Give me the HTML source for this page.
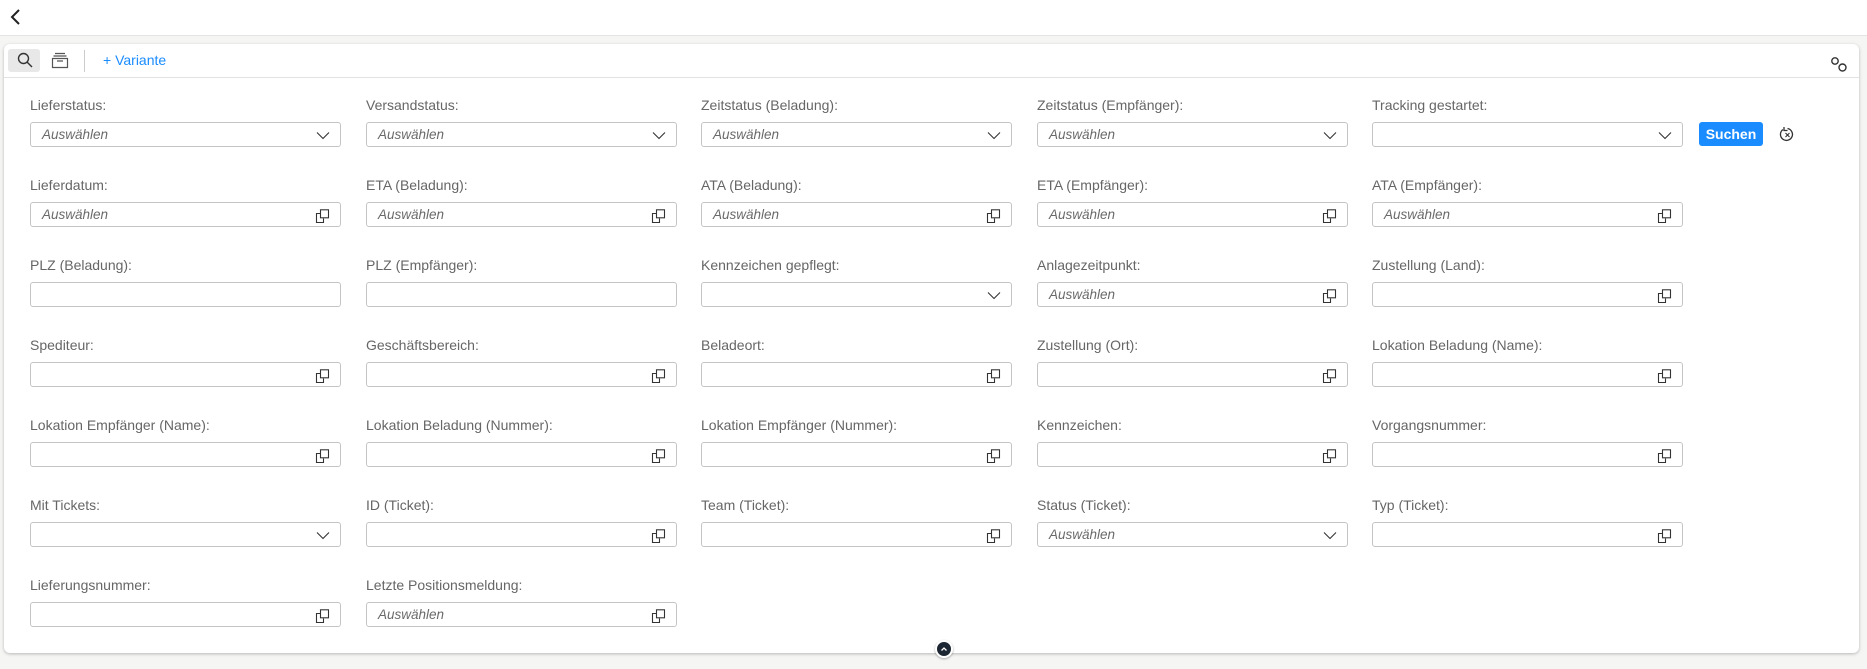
<!DOCTYPE html>
<html><head><meta charset="utf-8"><style>
*{box-sizing:border-box;margin:0;padding:0}
body{width:1867px;height:669px;background:#f5f5f4;font-family:"Liberation Sans",sans-serif;position:relative;overflow:hidden}
.top{position:absolute;left:0;top:0;width:1867px;height:36px;background:#fff;border-bottom:1px solid #e4e4e4}
.card{position:absolute;left:4px;top:44px;width:1855px;height:609px;background:#fff;border-radius:6px;box-shadow:0 1px 3px rgba(0,0,0,.25)}
.tb{position:absolute;left:0;top:0;width:100%;height:34px;border-bottom:1px solid #e2e2e2}
.lbl{position:absolute;font-size:14px;color:#666;white-space:nowrap}
.inp{position:absolute;width:311px;height:25px;border:1px solid #c4c4c4;border-radius:3px;background:#fff}
.inp i{position:absolute;left:11px;top:4px;font-size:13.5px;color:#6a6a6a}
.inp svg{position:absolute;right:10px;top:6px}
</style></head><body>
<div class="top"><svg style="position:absolute;left:10px;top:9px" width="12" height="16" viewBox="0 0 12 16"><path d="M9 1L2 8l7 7" stroke="#222" stroke-width="2" fill="none"/></svg></div>
<div class="card">
<div class="tb">
<div style="position:absolute;left:4px;top:5px;width:32px;height:23px;background:#e8e8e8;border-radius:3px"></div>
<svg style="position:absolute;left:13px;top:8px" width="16" height="16" viewBox="0 0 16 16"><circle cx="6.5" cy="6.5" r="5" stroke="#333" stroke-width="1.4" fill="none"/><path d="M10 10l5 5" stroke="#333" stroke-width="1.4"/></svg>
<svg style="position:absolute;left:47px;top:8px" width="18" height="17" viewBox="0 0 18 17"><path d="M4 1.5h10M2.5 4h13M1.5 6.5h15v9h-15z M6 9h6" stroke="#555" stroke-width="1.2" fill="none"/></svg>
<div style="position:absolute;left:80px;top:6px;width:1px;height:22px;background:#ccc"></div>
<div style="position:absolute;left:99px;top:8px;font-size:14px;color:#1a8cff">+ Variante</div>
<svg style="position:absolute;left:1826px;top:12px" width="20" height="18" viewBox="0 0 20 18"><circle cx="5" cy="5" r="3.2" stroke="#333" stroke-width="1.4" fill="none"/><circle cx="12.5" cy="11.5" r="3.5" stroke="#333" stroke-width="1.4" fill="none"/></svg>
</div>
<div style="position:absolute;left:1695px;top:78px;width:64px;height:24px;background:#1a8cff;border-radius:3px;color:#fff;font-weight:bold;font-size:14px;line-height:24px;text-align:center">Suchen</div>
<svg style="position:absolute;left:1775px;top:82px" width="17" height="17" viewBox="0 0 17 17"><path d="M4 3.5A6 6 0 1 0 8.5 2.5" stroke="#333" stroke-width="1.3" fill="none"/><path d="M5 1v3.5h3.5" stroke="#333" stroke-width="1.3" fill="none"/><path d="M6.5 7l4 4M10.5 7l-4 4" stroke="#333" stroke-width="1.1"/></svg>
<div style="position:absolute;left:931px;top:596px;width:18px;height:18px;border-radius:50%;background:#1d2733;border:2px solid #fff;box-shadow:0 1px 2px rgba(0,0,0,.3)"><svg style="position:absolute;left:3px;top:3px" width="8" height="8" viewBox="0 0 8 8"><path d="M1.5 5.5L4 3l2.5 2.5" stroke="#fff" stroke-width="1.3" fill="none"/></svg></div>
</div>
<div id="f"></div>
<script>
const C=`<svg width="14" height="9" viewBox="0 0 14 9"><path d="M1 1.5l6 6 6-6" stroke="#333" stroke-width="1.1" fill="none"/></svg>`;
const V=`<svg width="15" height="14" viewBox="0 0 15 14"><path d="M5.5 4.5H1.5v9h7v-4" stroke="#333" stroke-width="1.1" fill="none"/><rect x="5.5" y="0.8" width="8" height="8" stroke="#333" stroke-width="1.1" fill="none"/></svg>`;
const rows=[
[["Lieferstatus:",1,"c"],["Versandstatus:",1,"c"],["Zeitstatus (Beladung):",1,"c"],["Zeitstatus (Empfänger):",1,"c"],["Tracking gestartet:",0,"c"]],
[["Lieferdatum:",1,"v"],["ETA (Beladung):",1,"v"],["ATA (Beladung):",1,"v"],["ETA (Empfänger):",1,"v"],["ATA (Empfänger):",1,"v"]],
[["PLZ (Beladung):",0,""],["PLZ (Empfänger):",0,""],["Kennzeichen gepflegt:",0,"c"],["Anlagezeitpunkt:",1,"v"],["Zustellung (Land):",0,"v"]],
[["Spediteur:",0,"v"],["Geschäftsbereich:",0,"v"],["Beladeort:",0,"v"],["Zustellung (Ort):",0,"v"],["Lokation Beladung (Name):",0,"v"]],
[["Lokation Empfänger (Name):",0,"v"],["Lokation Beladung (Nummer):",0,"v"],["Lokation Empfänger (Nummer):",0,"v"],["Kennzeichen:",0,"v"],["Vorgangsnummer:",0,"v"]],
[["Mit Tickets:",0,"c"],["ID (Ticket):",0,"v"],["Team (Ticket):",0,"v"],["Status (Ticket):",1,"c"],["Typ (Ticket):",0,"v"]],
[["Lieferungsnummer:",0,"v"],["Letzte Positionsmeldung:",1,"v"]]];
const xs=[30,366,701,1037,1372];let h="";
rows.forEach((r,i)=>{const y=122+i*80;r.forEach((c,j)=>{
h+=`<div class="lbl" style="left:${xs[j]}px;top:${y-25}px">${c[0]}</div><div class="inp" style="left:${xs[j]}px;top:${y}px">${c[1]?'<i>Auswählen</i>':''}${c[2]=="c"?C.replace('<svg','<svg style="top:8px"'):c[2]=="v"?V:''}</div>`;});});
document.getElementById("f").innerHTML=h;
</script>
</body></html>
